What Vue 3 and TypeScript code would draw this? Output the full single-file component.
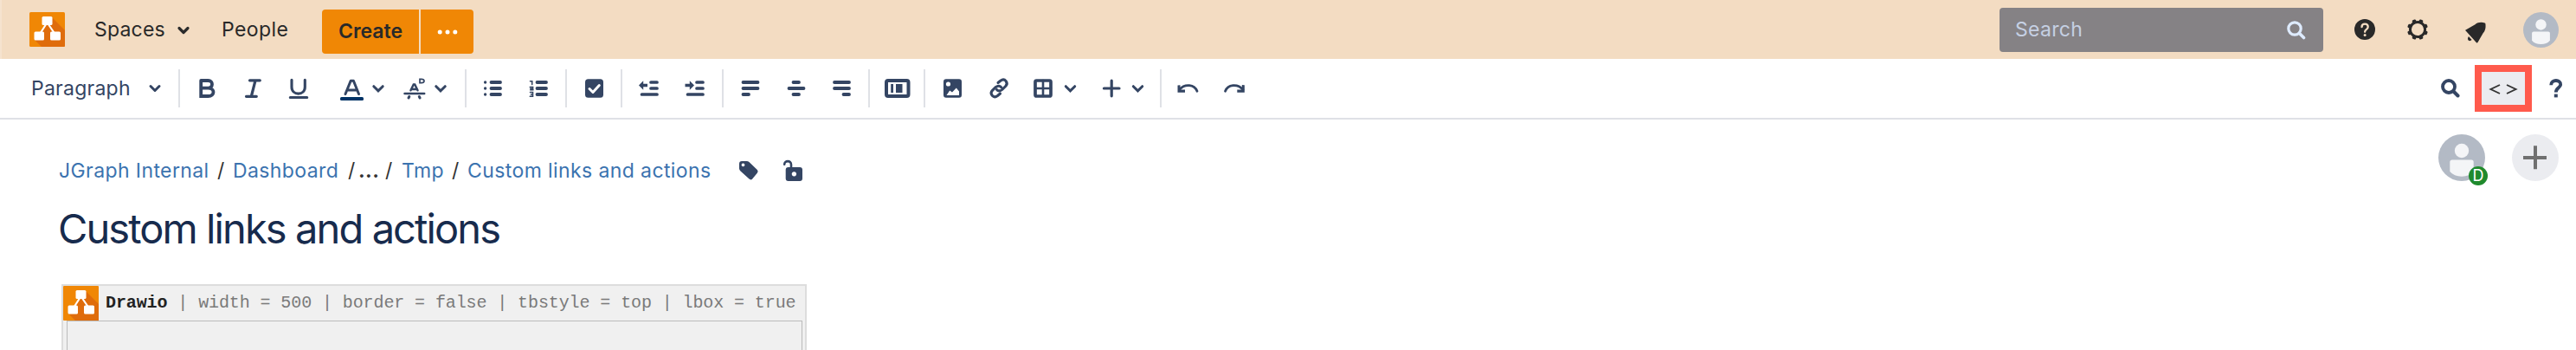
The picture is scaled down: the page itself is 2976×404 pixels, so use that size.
<script setup lang="ts">
interface Tool { id: string; width: number }

const groups: Tool[][] = [
  [
    { id: 'bold', width: 53 },
    { id: 'italic', width: 53 },
    { id: 'underline', width: 53 },
    { id: 'color', width: 84 },
    { id: 'more', width: 78 },
  ],
  [{ id: 'bullets', width: 53 }, { id: 'numbers', width: 53 }],
  [{ id: 'task', width: 54 }],
  [{ id: 'outdent', width: 53 }, { id: 'indent', width: 54 }],
  [{ id: 'left', width: 53 }, { id: 'center', width: 53 }, { id: 'right', width: 53 }],
  [{ id: 'layout', width: 54 }],
  [
    { id: 'image', width: 54 },
    { id: 'link', width: 52 },
    { id: 'table', width: 79 },
    { id: 'insert', width: 78 },
  ],
  [{ id: 'undo', width: 53 }, { id: 'redo', width: 53 }],
]

const params: string[] = ['width = 500', 'border = false', 'tbstyle = top', 'lbox = true']
</script>

<template>
  <div class="page">
    <header class="header">
      <svg class="logo" width="41" height="40" viewBox="0 0 41 40">
        <rect width="41" height="40" rx="1.5" fill="#f08705" />
        <path d="M25 5 41 21V38.500Q41 40 39.500 40H14L5.500 31.500 13 22 20 13Z" fill="#df6c0c" />
        <path d="M20.500 12 11.500 26M20.500 12 30 26" stroke="#fff" stroke-width="2.200" />
        <rect x="14.500" y="5" width="12" height="10" rx="1.500" fill="#fff" />
        <rect x="5.500" y="22.500" width="11.500" height="10" rx="1.500" fill="#fff" />
        <rect x="24" y="22.500" width="12" height="10" rx="1.500" fill="#fff" />
      </svg>
      <span class="nav spaces">Spaces</span>
      <svg class="nav-chev" width="16" height="12" viewBox="0 0 16 12">
        <path d="M3 3.500 8 8.500 13 3.500" fill="none" stroke="#2b2b2b" stroke-width="3.200" stroke-linecap="round" stroke-linejoin="round" />
      </svg>
      <span class="nav people">People</span>
      <div class="create-group">
        <button class="create"><span>Create</span></button>
        <button class="dots">
          <svg width="24" height="6" viewBox="0 0 24 6" fill="#fff">
            <circle cx="3.200" cy="3" r="2.500" /><circle cx="12" cy="3" r="2.500" /><circle cx="20.800" cy="3" r="2.500" />
          </svg>
        </button>
      </div>
      <div class="search">
        <span>Search</span>
        <svg width="22" height="22" viewBox="0 0 22 22" fill="none" stroke="#deebff">
          <circle cx="9" cy="9" r="7.200" stroke-width="3.200" />
          <path d="m14.500 14.500 5 5" stroke-width="3.600" stroke-linecap="round" />
        </svg>
      </div>
      <svg class="help" width="24" height="24" viewBox="0 0 24 24">
        <circle cx="12" cy="12" r="12" fill="#292929" />
        <path d="M8.500 9.200C8.500 4.500 15.700 4.600 15.700 9.100 15.700 12 12.100 11.700 12.100 14.800" fill="none" stroke="#f3dcc2" stroke-width="2.300" stroke-linecap="round" />
        <circle cx="12.100" cy="18.600" r="1.500" fill="#f3dcc2" />
      </svg>
      <svg class="gear" width="24" height="24" viewBox="0 0 24 24">
        <circle cx="12" cy="12" r="8.600" fill="none" stroke="#292929" stroke-width="3" />
        <g fill="#292929">
          <rect v-for="n in 8" :key="n" x="9.700" y="0" width="4.600" height="4.500" rx="1.300" :transform="`rotate(${n * 45 + 22.5} 12 12)`" />
        </g>
      </svg>
      <svg class="bell" width="24" height="25" viewBox="0 0 24 25" fill="#292929">
        <path d="M.6 10.600C-.1 10.200 0 9.700.6 9.400L11.500 3.300C14.500 .6 19 .3 22.500 1.500 23 1.600 23.400 2 23.400 2.500 23.700 5.500 24 10 20.500 13.500L14.600 23.800C14.200 24.500 13.500 24.700 13 24.200Z" />
        <path d="M4 17.100Q1.600 20.700 4.500 22.100 6 22.500 7.600 21.100Z" />
      </svg>
      <svg class="avatar-sm" width="41" height="41" viewBox="0 0 54 54">
        <circle cx="27" cy="27" r="27" fill="#b3bac5" />
        <circle cx="27" cy="19" r="8.200" fill="#f4f5f7" />
        <path d="M13.300 32Q13.300 29.500 16 29.500H38.200Q40.700 29.500 40.700 32V43Q36 48.700 27 48.700 18 48.700 13.300 43Z" fill="#f4f5f7" />
      </svg>
    </header>

    <div class="toolbar">
      <div class="para">
        <span>Paragraph</span>
        <svg width="16" height="12" viewBox="0 0 16 12">
          <path d="M3 3.500 8 8.500 13 3.500" fill="none" stroke="#344563" stroke-width="3" stroke-linecap="round" stroke-linejoin="round" />
        </svg>
      </div>
      <div v-for="(group, gi) in groups" :key="gi" class="group">
        <svg v-for="t in group" :key="t.id" class="tool" :width="t.width" height="44" :viewBox="`0 0 ${t.width} 44`">
          <path v-if="t.id === 'bold'" d="M20.200 13H28.500C34.500 13 34.500 21.600 28.500 21.600H20.200M28.500 21.600C36.500 21.600 36.500 31 28.500 31H20.200V13" stroke-width="3.800" />
          <path v-else-if="t.id === 'italic'" d="M23.500 12.800H35.300M19.500 31.300H31.300M30 13 25.400 31" stroke-width="3.200" />
          <path v-else-if="t.id === 'underline'" d="M19 12.300V20.500C19 30.600 34.300 30.600 34.300 20.500V12.300M17.300 32.500H36.700" stroke-width="3.100" />
          <g v-else-if="t.id === 'color'">
            <path d="M28 28.500 34.200 13.300H37.400L43.500 28.500M30.500 24H41" stroke-width="3" stroke-linejoin="round" />
            <rect class="fill-ink" x="22" y="32" width="27" height="4" rx="1.500" />
            <path d="m60.800 19.700 5.200 5.200 5.200-5.200" stroke-width="3" />
          </g>
          <g v-else-if="t.id === 'more'">
            <path d="M19.500 24.300 22.800 17.500H24.200L27.500 24.300M21 23H26M12.500 28H35.200" stroke-width="2.500" />
            <path d="M17 33 17.800 31.500M29.300 31.500 30.100 33" stroke-width="3" />
            <path d="M30 11.300V15.700H31.800Q35 15.700 35 13.500 35 11.300 31.800 11.300Z" stroke-width="1.700" />
            <path d="m48.800 19.700 5.200 5.200 5.200-5.200" stroke-width="3" />
          </g>
          <g v-else-if="t.id === 'bullets'">
            <path d="M24.500 15H35M24.500 22H35M24.500 29H35" stroke-width="3.800" />
            <path d="M17.600 15h.01M17.600 22h.01M17.600 29h.01" stroke-width="3.400" />
          </g>
          <g v-else-if="t.id === 'numbers'">
            <path d="M24.500 15H35M24.500 22H35M24.500 29H35" stroke-width="3.800" />
            <path stroke-width="1.600" d="M16.500 13.800H18.700V17.500M16.300 20.500H19.600V22.200H17V23.800H20M16.500 26.500H19.500V31.300H16.300M17.500 29H19.500" />
          </g>
          <g v-else-if="t.id === 'task'">
            <rect class="fill" x="17" y="11.200" width="21" height="21.500" rx="3.500" />
            <path class="light" d="m22 22.500 4 4L33.300 18.500" stroke-width="3" />
          </g>
          <g v-else-if="t.id === 'outdent'">
            <path d="M29 15H36M29 22H36M18.500 29H36" stroke-width="3.700" />
            <path class="fill" d="m15 18.500 5.200-5.300V16.800H25V20.300H20.200V23.800Z" />
          </g>
          <g v-else-if="t.id === 'indent'">
            <path d="M29 15H36M29 22H36M18.500 29H36" stroke-width="3.700" />
            <path class="fill" d="m26 18.500-5.200-5.300V16.800H15.500V20.300H20.800V23.800Z" />
          </g>
          <path v-else-if="t.id === 'left'" d="M18.500 15H35.500M18.500 22H35.500M18.500 29H25" stroke-width="3.800" />
          <path v-else-if="t.id === 'center'" d="M23.500 15H30M18.500 22H35.500M23.500 29H30" stroke-width="3.800" />
          <path v-else-if="t.id === 'right'" d="M18 15H35M18 22H35M28.500 29H35" stroke-width="3.800" />
          <g v-else-if="t.id === 'layout'">
            <rect x="15" y="13" width="25.500" height="18" rx="2" stroke-width="4" />
            <path class="fill" d="M20.200 17H23V27H20.200ZM26 17H33.500V27H26Z" />
          </g>
          <g v-else-if="t.id === 'image'">
            <rect class="fill" x="17" y="11.200" width="21" height="21.500" rx="3" />
            <circle class="hole" cx="22.500" cy="17" r="2.600" />
            <path class="hole" d="M20.500 30 24.200 24.500 27 26.500 31.800 21.500 35 25.500V30Z" />
          </g>
          <g v-else-if="t.id === 'link'">
            <path d="M26 15.500 28.800 13.200C34 9.500 38.300 15.500 34.700 19.500L30.700 23.500C28.500 25.600 25.500 25 24.500 23.500" stroke-width="3.100" />
            <path d="M28.500 28 25.500 30.500C20.500 34.200 15.800 28.200 19.500 24.300L23.500 20.500C26 18.500 28.500 19 29.800 20.800" stroke-width="3.100" />
          </g>
          <g v-else-if="t.id === 'table'">
            <rect x="17" y="13" width="18" height="18" rx="1.500" stroke-width="3.700" />
            <path d="M26 13V31M17 22H35" stroke-width="2.600" />
            <path d="m52.300 19.700 5.200 5.200 5.200-5.200" stroke-width="3" />
          </g>
          <g v-else-if="t.id === 'insert'">
            <path d="M26.200 13.200V30.800M17.400 22H35" stroke-width="3.200" />
            <path d="m51.300 19.700 5.200 5.200 5.200-5.200" stroke-width="3" />
          </g>
          <g v-else-if="t.id === 'undo'">
            <path d="M16.500 23.500C23 16 34 17.500 37 25.200" stroke-width="2.800" />
            <path class="fill" d="M14.500 18.500 17.500 18.200V23.500H23V26.800H14.500Z" />
          </g>
          <g v-else>
            <path d="M37 23.500C30.500 16 19.500 17.500 16.500 25.200" stroke-width="2.800" />
            <path class="fill" d="M38.800 18.200 35.800 18V23.500H30.300V26.800H38.800Z" />
          </g>
        </svg>
      </div>
      <div class="right-tools">
        <svg class="find" width="22" height="22" viewBox="0 0 22 22" fill="none" stroke="#344563">
          <circle cx="9" cy="9" r="7" stroke-width="3.800" />
          <path d="m14.500 14.500 5 5" stroke-width="4" stroke-linecap="round" />
        </svg>
        <div class="source">
          <svg width="34" height="14" viewBox="0 0 34 14" fill="none" stroke="#333" stroke-width="1.900">
            <path d="M13 2 2.500 7 13 12M21 2 31.500 7 21 12" />
          </svg>
        </div>
        <svg class="question" width="16" height="22" viewBox="0 0 16 22" fill="none" stroke="#344563">
          <path d="M2.200 7.200C2.200.2 13.700.5 13.200 6.800 12.800 10.300 7.800 10.500 7.800 15.500" stroke-width="3.800" />
          <path d="M7.800 17.600V21.400" stroke-width="4" />
        </svg>
      </div>
    </div>

    <main class="content">
      <div class="people-row">
        <div class="editor">
          <svg width="54" height="54" viewBox="0 0 54 54">
            <circle cx="27" cy="27" r="27" fill="#b3bac5" />
            <circle cx="27" cy="19" r="8.200" fill="#f4f5f7" />
            <path d="M13.300 32Q13.300 29.500 16 29.500H38.200Q40.700 29.500 40.700 32V43Q36 48.700 27 48.700 18 48.700 13.300 43Z" fill="#f4f5f7" />
          </svg>
          <span class="badge">D</span>
        </div>
        <svg class="add" width="54" height="54" viewBox="0 0 54 54">
          <circle cx="27" cy="27" r="27" fill="#ebecf0" />
          <path d="M27 13.300V40.300M13 27H40" stroke="#707070" stroke-width="4" />
        </svg>
      </div>
      <nav class="crumbs">
        <a class="c1">JGraph Internal</a><i class="s1">/</i>
        <a class="c2">Dashboard</a><i class="s2">/</i><b>...</b><i class="s3">/</i>
        <a class="c3">Tmp</a><i class="s4">/</i>
        <a class="c4">Custom links and actions</a>
        <svg class="tag" width="24" height="24" viewBox="0 0 24 24">
          <path fill-rule="evenodd" fill="#344563" d="M1 4Q1 1 4 1H9.500Q11.300 1 12.700 2.300L21.800 11Q23.500 12.700 21.800 14.700L16.200 21.500Q14.500 23.300 12.500 21.600L2.500 12.500Q1 11.200 1 9.500ZM5.500 3.500A1.900 1.900 0 1 0 5.510 3.500Z" />
        </svg>
        <svg class="lock" width="24" height="26" viewBox="0 0 24 26">
          <path d="M2.200 5.800C2.200 1 10 .7 10 6V10" fill="none" stroke="#344563" stroke-width="2.600" stroke-linecap="round" />
          <path fill-rule="evenodd" fill="#344563" d="M6.700 9H20Q23 9 23 12V22Q23 25 20 25H6.700Q3.700 25 3.700 22V12Q3.700 9 6.700 9ZM13.400 14.200A2.700 2.700 0 1 0 13.410 14.200Z" />
        </svg>
      </nav>
      <h1>Custom links and actions</h1>
      <section class="macro">
        <div class="macro-head">
          <svg width="41" height="40" viewBox="0 0 41 40">
            <rect width="41" height="40" rx="1" fill="#f08705" />
            <path d="M25 5 41 21V40H14L5.500 31.500 13 22 20 13Z" fill="#df6c0c" />
            <path d="M20.500 12 11.500 26M20.500 12 30 26" stroke="#fff" stroke-width="2.200" />
            <rect x="14.500" y="5" width="12" height="10" rx="1.500" fill="#fff" />
            <rect x="5.500" y="22.500" width="11.500" height="10" rx="1.500" fill="#fff" />
            <rect x="24" y="22.500" width="12" height="10" rx="1.500" fill="#fff" />
          </svg>
          <div class="macro-text"><strong>Drawio</strong><span v-for="p in params" :key="p"> | {{ p }}</span></div>
        </div>
        <div class="macro-body"></div>
      </section>
    </main>
  </div>
</template>

<style>
body { margin: 0; overflow: hidden; background: #fff; }
</style>

<style scoped>
.page { width: 2976px; height: 404px; overflow: hidden; background: #fff; font-family: Inter, "Liberation Sans", sans-serif; }
svg { display: block; flex: none; }
.header { display: flex; align-items: center; height: 68px; box-sizing: border-box; padding-left: 32px; background: #f3dcc2; border-left: 2px solid #f5e3cf; }
.nav { font-size: 23px; line-height: 30px; color: #292929; white-space: nowrap; flex: none; }
.spaces { width: 95px; margin-left: 34px; letter-spacing: 0.2px; }
.people { width: 116px; margin-left: 36px; letter-spacing: 0.4px; }
.nav-chev { margin-top: 2px; }
.create-group { display: flex; gap: 2px; margin-top: 5px; flex: none; }
button { border: 0; padding: 0; height: 51px; background: #f08705; font: inherit; display: flex; align-items: center; justify-content: center; }
.create { width: 112px; padding-bottom: 2px; border-radius: 4px 0 0 4px; color: #292929; font-size: 23px; font-weight: 600; }
.dots { width: 61px; border-radius: 0 4px 4px 0; }
.search { display: flex; align-items: center; justify-content: space-between; box-sizing: border-box; width: 374px; height: 51px; margin-left: auto; padding: 0 20px 0 18px; background: #858285; border-radius: 4px; color: #c5d0e3; font-size: 23px; flex: none; margin-top: 1px; }
.search span { letter-spacing: 0.3px; padding-bottom: 1px; }
.help { margin-left: 36px; }
.gear { margin-left: 37px; }
.bell { margin-left: 43px; margin-top: 7px; }
.avatar-sm { margin-left: 43px; margin-right: 20px; }
.toolbar { display: flex; align-items: center; height: 68px; border-bottom: 2px solid #dfe1e6; }
.para { display: flex; align-items: center; width: 206px; box-sizing: border-box; padding-left: 36px; color: #344563; font-size: 23px; flex: none; }
.para span { width: 135px; letter-spacing: 0.25px; }
.group { display: flex; height: 44px; border-left: 2px solid #dfe1e6; padding: 0 4px; flex: none; }
.tool { fill: none; stroke: #344563; stroke-linecap: round; }
.tool .fill { fill: #344563; stroke: none; }
.tool .hole { fill: #fff; stroke: none; }
.tool .fill-ink { fill: #003366; stroke: none; }
.tool .light { stroke: #fff; stroke-linejoin: round; }
.right-tools { display: flex; align-items: center; margin-left: auto; padding-right: 15px; }
.source { display: flex; align-items: center; justify-content: center; box-sizing: border-box; width: 66px; height: 54px; margin: 0 20px 0 17px; border: 8px solid #ff5a4c; background: #ebecf0; padding-top: 2px; }
.content { position: relative; box-sizing: border-box; height: 266px; padding-top: 29px; }
.people-row { position: absolute; right: 20px; top: 17px; display: flex; gap: 31px; }
.editor { position: relative; }
.badge { position: absolute; left: 35px; top: 37px; width: 22px; height: 22px; border-radius: 50%; background: #1f8a2d; color: #fff; font-size: 18px; line-height: 22px; text-align: center; }
.crumbs { display: flex; align-items: center; height: 60px; padding-left: 68px; font-size: 23px; color: #333; white-space: nowrap; letter-spacing: 0.4px; }
.crumbs a { color: #3b73af; flex: none; }
.crumbs i { font-style: normal; flex: none; }
.crumbs b { width: 31px; flex: none; font-weight: 700; }
.c1 { width: 183px; }
.c2 { width: 133px; }
.c3 { width: 58px; }
.c4 { width: 313px; }
.s1 { width: 18px; }
.s2 { width: 12px; }
.s3 { width: 19px; }
.s4 { width: 18px; }
.lock { margin-left: 27px; }
h1 { margin: 7px 0 0 67px; font-size: 47px; line-height: 60px; font-weight: 400; letter-spacing: -1.9px; color: #172b4d; white-space: nowrap; }
.macro { box-sizing: border-box; width: 861px; height: 120px; margin: 34px 0 0 71px; border: 2px solid #ddd; background: #f0f0f0; }
.macro-head { display: flex; height: 40px; }
.macro-text { margin-left: 8px; font: 20px/39px "Liberation Mono", monospace; letter-spacing: -0.1px; color: #7a7a7a; white-space: pre; }
.macro-text strong { color: #222; }
.macro-body { box-sizing: border-box; height: 90px; margin: 0 3px 0 4px; border: 1px solid #bbb; }
</style>
